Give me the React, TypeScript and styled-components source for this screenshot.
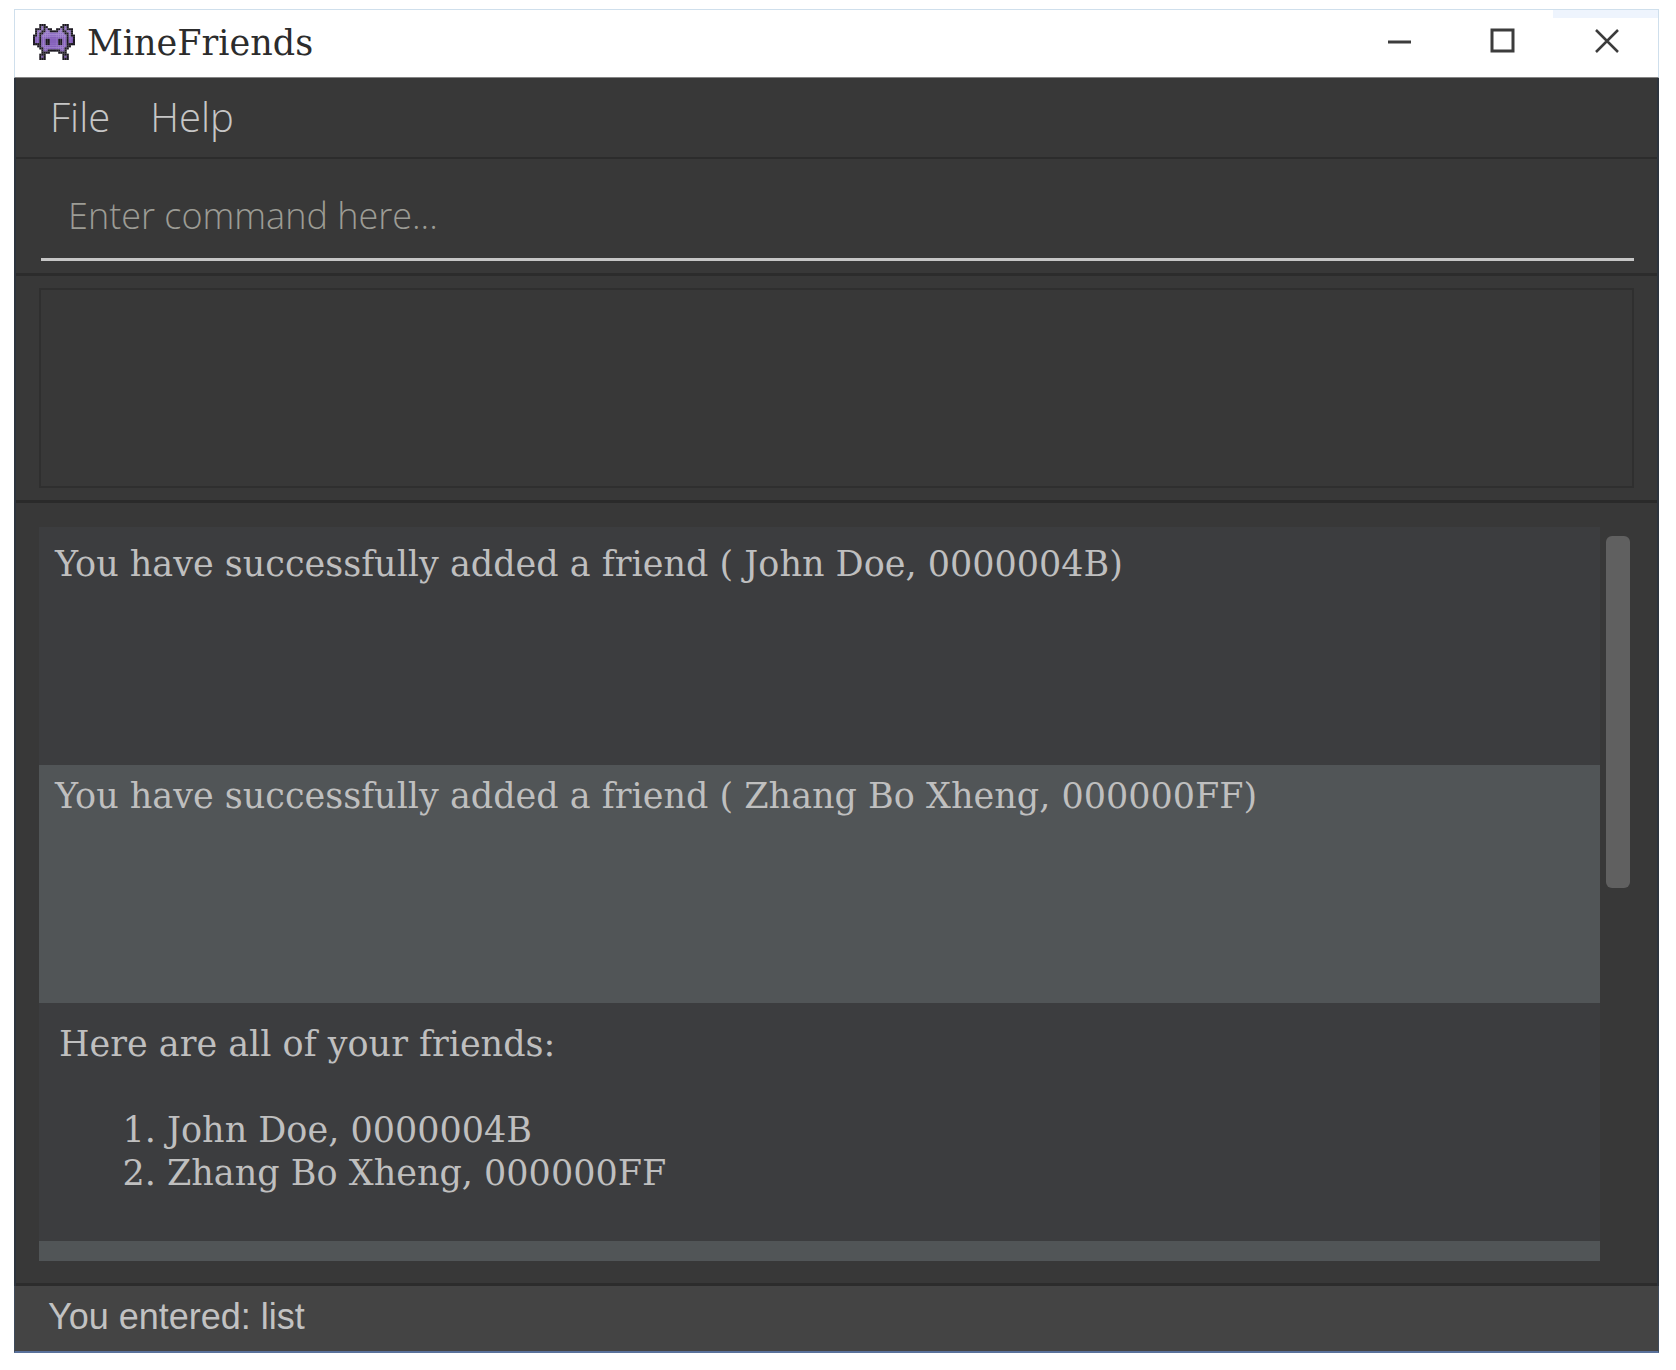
import React from "react";
import styled, { createGlobalStyle } from "styled-components";

const typewriter = `"DejaVu Serif", serif`;
const humanist = `"Open Sans", "Noto Sans", sans-serif`;

const GlobalStyle = createGlobalStyle`
  * { box-sizing: border-box; }
  body { margin: 0; background: #ffffff; }
`;

const Page = styled.div`
  display: flex;
  height: 100vh;
  min-height: 900px;
  padding: 9px 17px 17px 14px;
`;

const AppWindow = styled.main`
  flex: 1;
  min-width: 0;
  display: flex;
  flex-direction: column;
  background: #383838;
`;

const TitleBar = styled.header`
  display: flex;
  align-items: center;
  justify-content: space-between;
  height: 69px;
  padding: 0 35px 4px 18px;
  background: linear-gradient(#eef4fd, #eef4fd) top right / 105px 8px no-repeat #ffffff;
  border: 1px solid #cfdfec;
  border-bottom-color: #858585;
`;

const Brand = styled.div`
  display: flex;
  align-items: center;
  gap: 12px;
`;

const AppName = styled.h1`
  margin: 0;
  padding-top: 4px;
  font: 400 35px/43px ${typewriter};
  color: #2c2c2c;
`;

const WindowControls = styled.div`
  display: flex;
  gap: 72px;
`;

const ControlButton = styled.button`
  display: grid;
  place-items: center;
  width: 32px;
  height: 32px;
  padding: 0;
  border: 0;
  background: transparent;
  color: #3c3c3c;
`;

const Body = styled.div`
  flex: 1;
  min-height: 0;
  display: flex;
  flex-direction: column;
  border: solid #2d343d;
  border-width: 0 2px;
`;

const MenuBar = styled.nav`
  display: flex;
  align-items: center;
  gap: 40px;
  height: 81px;
  padding: 0 34px 2px;
  border-bottom: 2px solid #2c2c2c;
`;

const MenuButton = styled.button`
  padding: 0;
  border: 0;
  background: transparent;
  font: 300 40px/52px ${humanist};
  color: #c6c6c6;
`;

const CommandPane = styled.section`
  height: 117px;
  padding: 14px 23px 0 25px;
  border-bottom: 3px solid #2c2c2c;
`;

const CommandInput = styled.input`
  display: block;
  width: 100%;
  height: 88px;
  padding: 0 27px;
  border: 0;
  border-bottom: 3px solid #c6c6c6;
  border-radius: 0;
  outline: 0;
  background: transparent;
  font: 300 36px/48px ${humanist};
  color: #d0d0d0;
  &::placeholder { color: #9c9c95; opacity: 1; }
`;

const ResultPane = styled.section`
  height: 227px;
  padding: 12px 23px;
  border-bottom: 3px solid #2a2a2a;
`;

const ResultBox = styled.div`
  height: 100%;
  border: 2px solid #2f2f2f;
`;

const HistoryPane = styled.section`
  flex: 1;
  min-height: 0;
  display: flex;
  gap: 6px;
  padding: 24px 27px 22px 23px;
  border-bottom: 3px solid #2c2c2c;
`;

const History = styled.div`
  flex: 1;
  min-width: 0;
  overflow: hidden;
  font: 400 35px/43px ${typewriter};
  color: #bfbfbf;
`;

const Entry = styled.article<{ $alt?: boolean; $top: number; $left: number }>`
  min-height: 238px;
  padding: ${(p) => p.$top}px 16px 16px ${(p) => p.$left}px;
  background: ${(p) => (p.$alt ? "#515557" : "#3c3d3f")};
`;

const Line = styled.p`
  margin: 0;
`;

const Friends = styled.ol`
  margin: 43px 0 0;
  padding-left: 108px;
`;

const ScrollTrack = styled.div`
  width: 24px;
  padding-top: 9px;
`;

const ScrollThumb = styled.div`
  height: 352px;
  border-radius: 6px;
  background: #606060;
`;

const StatusBar = styled.footer`
  display: flex;
  align-items: center;
  height: 67px;
  padding: 0 35px 4px 33px;
  border: solid #3f4b5b;
  border-width: 0 1px 2px;
  border-bottom-color: #59719b;
  background: #444444;
  font: 400 36px/40px "Liberation Sans", Arial, sans-serif;
  color: #c2c2c2;
`;

// Left half of the sprite; the right half is its mirror image.
const sprite = [
  "...###....",
  "...#p##...",
  ".###p#p##.",
  ".#pp##pp##",
  ".#p##ppppp",
  "##p#pppppp",
  "#pp#pppppp",
  "#pp#pp##pp",
  "#pp#pp##pp",
  "####pp##pp",
  "..##pppppp",
  "...##ppppp",
  "....#pp###",
  "....####..",
  "...###....",
  "...#p#....",
  "...###....",
].map((half) => half + half.split("").reverse().join(""));

const purples = ["#8f6fc4", "#8662bc", "#7956ad"];

function Monster() {
  return (
    <svg width="42" height="36" viewBox="0 0 20 17" preserveAspectRatio="none" aria-hidden="true">
      {sprite.flatMap((row, y) =>
        row.split("").map((c, x) =>
          c === "." ? null : (
            <rect
              key={`${x}-${y}`}
              x={x}
              y={y}
              width="1.05"
              height="1.05"
              fill={c === "#" ? "#1d1922" : purples[Math.floor(y / 6)]}
            />
          )
        )
      )}
    </svg>
  );
}

const controls = [
  { label: "Minimize", d: "M5 16H28", width: 3 },
  { label: "Maximize", d: "M5 4H26V25H5Z", width: 3 },
  { label: "Close", d: "M5 4L27 26M27 4L5 26", width: 2.5 },
];

export default function App() {
  return (
    <Page>
      <GlobalStyle />
      <AppWindow>
        <TitleBar>
          <Brand>
            <Monster />
            <AppName>MineFriends</AppName>
          </Brand>
          <WindowControls>
            {controls.map((c) => (
              <ControlButton key={c.label} type="button" aria-label={c.label}>
                <svg width="32" height="32" viewBox="0 0 32 32" fill="none" stroke="currentColor" strokeWidth={c.width}>
                  <path d={c.d} />
                </svg>
              </ControlButton>
            ))}
          </WindowControls>
        </TitleBar>
        <Body>
          <MenuBar>
            <MenuButton type="button">File</MenuButton>
            <MenuButton type="button">Help</MenuButton>
          </MenuBar>
          <CommandPane>
            <CommandInput type="text" aria-label="Command" placeholder="Enter command here..." />
          </CommandPane>
          <ResultPane>
            <ResultBox />
          </ResultPane>
          <HistoryPane>
            <History>
              <Entry $top={16} $left={16}>
                <Line>You have successfully added a friend ( John Doe, 0000004B)</Line>
              </Entry>
              <Entry $alt $top={10} $left={16}>
                <Line>You have successfully added a friend ( Zhang Bo Xheng, 000000FF)</Line>
              </Entry>
              <Entry $top={20} $left={20}>
                <Line>Here are all of your friends:</Line>
                <Friends>
                  <li>John Doe, 0000004B</li>
                  <li>Zhang Bo Xheng, 000000FF</li>
                </Friends>
              </Entry>
              <Entry $alt $top={16} $left={16} />
            </History>
            <ScrollTrack>
              <ScrollThumb />
            </ScrollTrack>
          </HistoryPane>
        </Body>
        <StatusBar>You entered: list</StatusBar>
      </AppWindow>
    </Page>
  );
}
